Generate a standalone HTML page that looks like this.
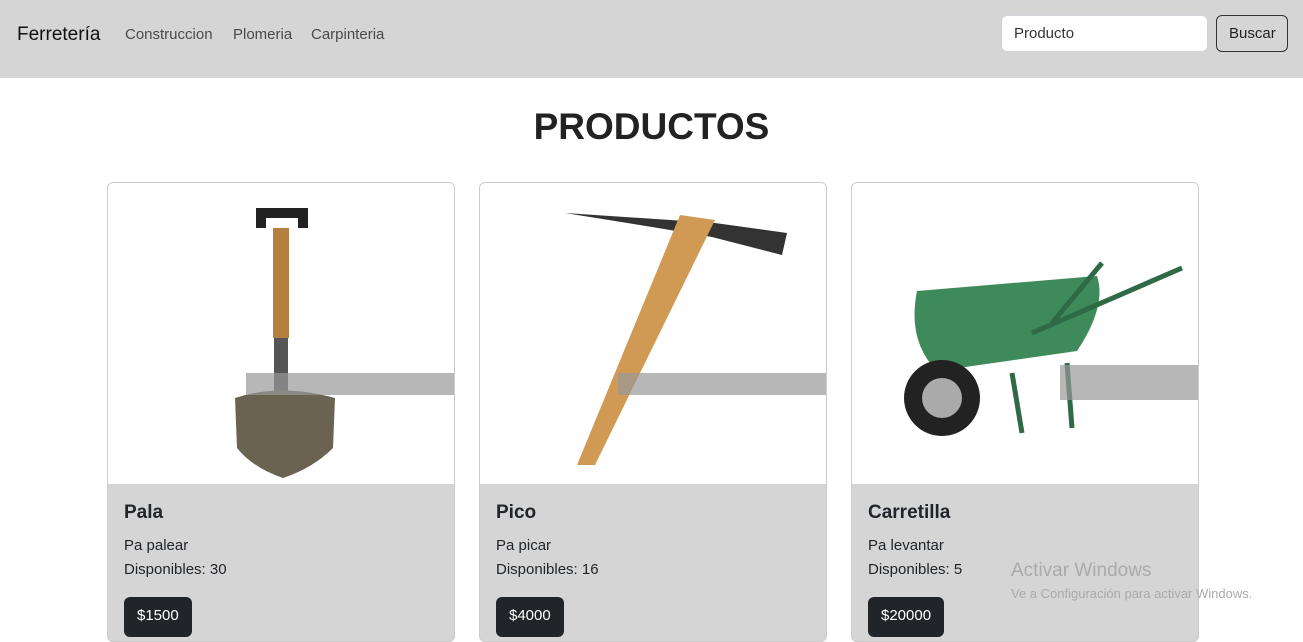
<!DOCTYPE html>
<html><head><meta charset="utf-8"><style>
*{box-sizing:border-box;margin:0;padding:0}
body{width:1303px;height:629px;overflow:hidden;background:#fff;font-family:"Liberation Sans",sans-serif;color:#212529}
nav{height:78px;background:#d5d5d5;position:relative}
.brand{position:absolute;left:17px;top:24px;font-size:19px;color:#111}
.links{position:absolute;left:125px;top:26px;font-size:15px;color:#4a4a4a}
.links span{position:absolute;white-space:nowrap}
.inp{position:absolute;left:1001px;top:15px;width:207px;height:37px;background:#fff;border:1px solid #ced4da;border-radius:6px;padding:9px 12px;font-size:15px;color:#333}
.btn{position:absolute;left:1216px;top:15px;width:72px;height:37px;border:1px solid #333;border-radius:6px;padding:9px 12px;font-size:15px;color:#222}
h1{position:absolute;top:106px;width:100%;text-align:center;font-size:37px;font-weight:600;color:#222}
.card{position:absolute;top:182px;width:348px;height:460px;border:1px solid #ccc;border-radius:6px;overflow:hidden;background:#d5d5d5}
.img{height:301px;background:#fff;position:relative}
.body{padding:16px}
.t{font-size:19px;font-weight:600;line-height:26px}
.p{font-size:15px;line-height:24px}
.pr{display:inline-block;margin-top:15px;background:#212529;color:#fff;border-radius:6px;padding:10px 13px;font-size:15px;height:40px}
.wm{position:absolute;left:1011px;top:560px;color:#aaa;font-size:19px}
.wm2{position:absolute;left:1011px;top:586px;color:#aaa;font-size:13px}
</style></head><body>
<nav><div class="brand">Ferretería</div><div class="links"><span style="left:0">Construccion</span><span style="left:108px">Plomeria</span><span style="left:186px">Carpinteria</span></div>
<div class="inp">Producto</div><div class="btn">Buscar</div></nav>
<h1>PRODUCTOS</h1>
<div class="card" style="left:107px"><div class="img"><svg width="348" height="301">
<path d="M148 25h52v20h-10v-10h-32v10h-10z" fill="#222"/><rect x="165" y="45" width="16" height="110" fill="#b5803e"/><rect x="166" y="155" width="14" height="60" fill="#555"/>
<path d="M127 215q45-15 100 0l-2 50q-20 20-50 30q-30-10-46-30z" fill="#6b6352"/>
<rect x="138" y="190" width="210" height="22" fill="#999" opacity=".7"/></svg></div>
<div class="body"><div class="t">Pala</div><div class="p" style="margin-top:8px">Pa palear</div><div class="p">Disponibles: 30</div><div class="pr">$1500</div></div></div>
<div class="card" style="left:479px"><div class="img"><svg width="348" height="301">
<path d="M85 30l150 10 72 10-5 22-70-18-60-10z" fill="#333"/><path d="M200 32l35 5-120 245h-18z" fill="#d09a55"/>
<rect x="138" y="190" width="210" height="22" fill="#999" opacity=".7"/></svg></div>
<div class="body"><div class="t">Pico</div><div class="p" style="margin-top:8px">Pa picar</div><div class="p">Disponibles: 16</div><div class="pr">$4000</div></div></div>
<div class="card" style="left:851px"><div class="img"><svg width="348" height="301">
<path d="M65 108l180-15q10 30-20 75l-140 20q-30-30-20-80z" fill="#3f8a5a"/><path d="M180 150l150-65" stroke="#2d6a45" stroke-width="5"/><path d="M200 140l50-60" stroke="#2d6a45" stroke-width="5"/>
<circle cx="90" cy="215" r="38" fill="#222"/><circle cx="90" cy="215" r="20" fill="#aaa"/><path d="M160 190l10 60M215 180l5 65" stroke="#2d6a45" stroke-width="5"/>
<rect x="208" y="182" width="140" height="35" fill="#999" opacity=".7"/></svg></div>
<div class="body"><div class="t">Carretilla</div><div class="p" style="margin-top:8px">Pa levantar</div><div class="p">Disponibles: 5</div><div class="pr">$20000</div></div></div>
<div class="wm">Activar Windows</div><div class="wm2">Ve a Configuración para activar Windows.</div>
</body></html>
